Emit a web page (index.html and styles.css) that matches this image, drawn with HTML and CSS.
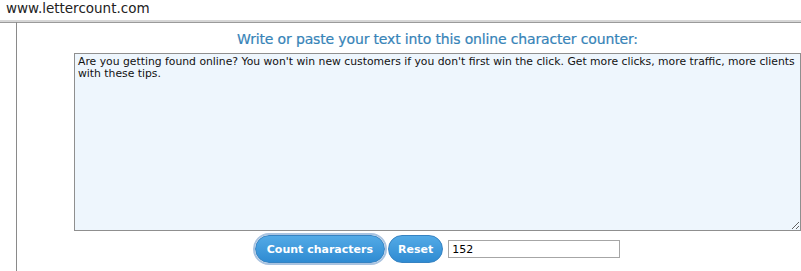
FILE: index.html
```html
<!DOCTYPE html>
<html lang="en">
<head>
    <meta charset="UTF-8">
    <title>Letter Count</title>
    <link rel="stylesheet" href="styles.css">
</head>
<body>
    <div class="topbar">www.lettercount.com</div>

    <div class="page">
        <div class="counter">
            <h2>Write or paste your text into this online character counter:</h2>
            <textarea id="text">Are you getting found online? You won't win new customers if you don't first win the click. Get more clicks, more traffic, more clients with these tips.</textarea>
            <div class="controls">
                <button class="btn focused" onclick="countChars()">Count characters</button>
                <button class="btn reset" onclick="resetText()">Reset</button>
                <input type="text" id="result" value="152">
            </div>
        </div>
    </div>

    <script>
        function countChars() {
            const text = document.getElementById('text').value;
            document.getElementById('result').value = text.length;
        }

        function resetText() {
            document.getElementById('text').value = '';
            document.getElementById('result').value = '';
        }
    </script>
</body>
</html>
```

FILE: styles.css
```css
body {
    margin: 0;
    background: #fff;
    font-family: "DejaVu Sans", Verdana, sans-serif;
    overflow: hidden;
}

.topbar {
    height: 20px;
    padding-left: 6px;
    font-size: 13.5px;
    line-height: 17px;
    color: #222;
    border-bottom: 2px solid #d6d6d6;
    box-shadow: 0 1px 0 #9a9a9a;
}

.page {
    margin-left: 16px;
    border-left: 1px solid #8a8a8a;
    height: 260px;
}

.counter {
    margin-left: 57px;
    width: 727px;
    text-align: center;
}

h2 {
    margin: 0;
    padding-top: 9px;
    height: 22px;
    font-size: 14px;
    font-weight: normal;
    color: #3784b8;
    letter-spacing: -0.15px;
    -webkit-text-stroke: 0.2px #3784b8;
}

textarea {
    display: block;
    box-sizing: border-box;
    width: 727px;
    height: 178px;
    margin: 0;
    padding: 2px 3px;
    border: 1px solid #8f8f8f;
    background: #eef6fd;
    font-family: "DejaVu Sans", Verdana, sans-serif;
    font-size: 10.8px;
    line-height: 12px;
    color: #111;
    resize: both;
}

.controls {
    display: flex;
    justify-content: center;
    align-items: center;
    gap: 3px;
    margin-top: 4px;
}

.btn {
    height: 28px;
    padding: 0 11px;
    border: 1px solid #3683c2;
    border-radius: 14px;
    background: linear-gradient(#53aae6, #2f8bd2);
    color: #fff;
    font-family: "DejaVu Sans", Verdana, sans-serif;
    font-size: 11px;
    font-weight: bold;
}

.btn.focused {
    outline: 2px solid #a9c3e0;
    outline-offset: 0;
}

.btn.reset {
    padding: 0 9px;
}

#result {
    width: 164px;
    height: 14px;
    margin-left: 2px;
    padding: 1px 3px;
    border: 1px solid #a6a6a6;
    font-family: "DejaVu Sans", Verdana, sans-serif;
    font-size: 11px;
}
```
